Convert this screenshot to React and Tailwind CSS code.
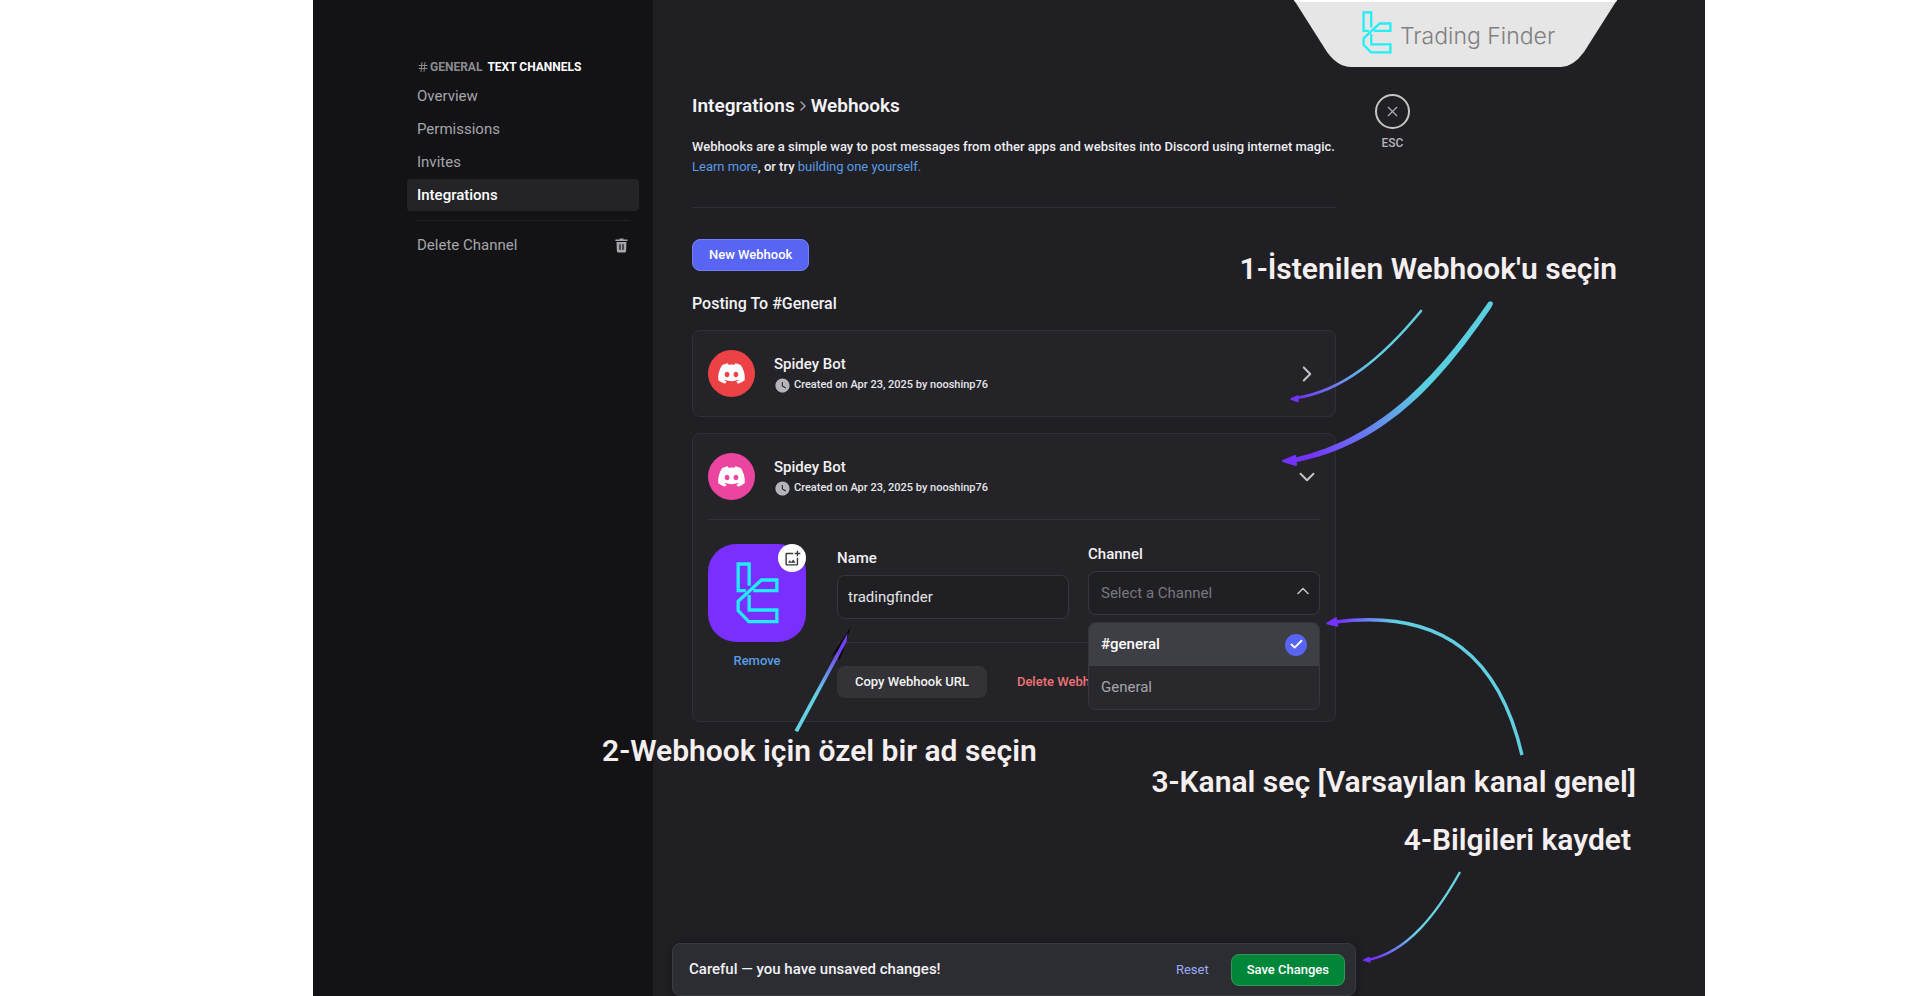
import { useState } from "react";
import { Check, ChevronDown, ChevronRight, ChevronUp, Hash, X } from "lucide-react";
import { FaDiscord } from "react-icons/fa";
import { MdOutlineAddPhotoAlternate, MdWatchLater } from "react-icons/md";

function TradingFinderMark({ className }) {
  return (
    <svg viewBox="172 150 128 186" className={className} fill="none" stroke="currentColor" strokeWidth="10" aria-hidden="true">
      <path d="M211 221V156H178V236H201" />
      <path d="M223 236H294V204H248L178 268V296L210 329H294V294H211V249" />
    </svg>
  );
}

function TrashIcon() {
  return (
    <svg viewBox="0 0 13 15" className="h-[15px] w-[13px]" aria-hidden="true">
      <path fill="currentColor" d="M4.5 0.5h4v1H12a.7.7 0 0 1 0 1.5H1a.7.7 0 0 1 0-1.500H4.500z" />
      <path fill="currentColor" d="M1.500 4h10l-.4 9a1.600 1.600 0 0 1-1.600 1.500h-6A1.600 1.600 0 0 1 1.900 13z" />
      <path stroke="#131315" strokeWidth="1.200" strokeLinecap="round" d="M5 6.500v5M8 6.500v5" />
    </svg>
  );
}

const navItems = ["Overview", "Permissions", "Invites", "Integrations"];

function Sidebar() {
  return (
    <aside className="w-[340px] shrink-0 bg-[#131315] pl-[94px] pr-[14px] pt-[57px]">
      <div className="flex h-5 items-center gap-[5px] pl-[10px] text-xs font-bold">
        <span className="flex items-center gap-px text-[#8b8b91]">
          <Hash className="size-3" />
          GENERAL
        </span>
        <span className="text-white">TEXT CHANNELS</span>
      </div>
      <nav className="mt-[3px] flex flex-col gap-px text-[15px]">
        {navItems.map((item) =>
          item === "Integrations" ? (
            <a key={item} href="#integrations" aria-current="page" className="flex h-8 items-center rounded bg-[#242427] px-[10px] font-medium text-white">
              {item}
            </a>
          ) : (
            <a key={item} href={"#" + item.toLowerCase()} className="flex h-8 items-center rounded px-[10px] text-[#a5a5ab]">
              {item}
            </a>
          )
        )}
      </nav>
      <hr className="mx-[9px] mt-[9px] border-[#212124]" />
      <button type="button" className="mt-2 flex h-8 w-full items-center justify-between pl-[10px] pr-[11px] text-[15px] text-[#a5a5ab]">
        Delete Channel
        <TrashIcon />
      </button>
    </aside>
  );
}

function WebhookHeader({ color, open }) {
  return (
    <button type="button" aria-expanded={open} className="flex h-[85px] w-full items-center text-left">
      <span className={"flex size-[47px] items-center justify-center rounded-full text-white " + color}>
        <FaDiscord className="size-[29px]" />
      </span>
      <span className="ml-[19px] flex flex-col">
        <span className="text-[15px] leading-6 font-medium text-[#f2f2f4]">Spidey Bot</span>
        <span className="flex h-5 items-center gap-[3px] text-[11px] font-medium text-[#e6e6ea]">
          <MdWatchLater className="size-[17px] text-[#b4b4ba]" />
          Created on Apr 23, 2025 by nooshinp76
        </span>
      </span>
      {open ? (
        <ChevronDown className="ml-auto size-[26px] text-[#c4c4c9]" strokeWidth={1.8} />
      ) : (
        <ChevronRight className="ml-auto size-[26px] text-[#c4c4c9]" strokeWidth={1.8} />
      )}
    </button>
  );
}

const channels = ["#general", "General"];

function ChannelField() {
  const [channel, setChannel] = useState("");
  return (
    <div>
      <label htmlFor="channel" className="block text-[15px] leading-5 font-medium text-[#f2f2f4]">
        Channel
      </label>
      <div className="relative mt-[7px]">
        <select
          id="channel"
          value={channel}
          onChange={(e) => setChannel(e.target.value)}
          className="h-11 w-full appearance-none rounded-lg border border-[#36363c] bg-[#202024] px-3 text-[15px] text-[#77777e] outline-none"
        >
          <option value="">Select a Channel</option>
          {channels.map((name) => (
            <option key={name}>{name}</option>
          ))}
        </select>
        <ChevronUp className="pointer-events-none absolute top-[10px] right-[7px] size-5 text-[#c4c4c9]" strokeWidth={1.8} />
        <ul role="listbox" aria-label="Channel" className="absolute top-full z-10 mt-[7px] w-full overflow-hidden rounded-lg border border-[#36363c] bg-[#28282d] text-[15px]">
          <li role="option" aria-selected="true" className="flex h-[43px] items-center justify-between bg-[#3e3e45] px-3 font-medium text-white">
            #general
            <span className="flex size-[22px] items-center justify-center rounded-full bg-[#5865f2]">
              <Check className="size-[15px]" strokeWidth={3} />
            </span>
          </li>
          <li role="option" aria-selected="false" className="flex h-[43px] items-center px-3 text-[#a5a5ab]">
            General
          </li>
        </ul>
      </div>
    </div>
  );
}

function WebhookEditor() {
  return (
    <div className="flex gap-[31px] border-t border-[#323238] pt-6 pb-[23px]">
      <div className="w-[98px] shrink-0">
        <div className="relative flex size-[98px] items-center justify-center rounded-[28px] bg-[#7b2fff]">
          <TradingFinderMark className="h-[62px] w-[43px] text-[#22eaf8]" />
          <button type="button" aria-label="Change avatar" className="absolute top-0 right-0 flex size-7 items-center justify-center rounded-full bg-white text-[#3a3a40]">
            <MdOutlineAddPhotoAlternate className="size-[17px]" />
          </button>
        </div>
        <button type="button" className="mt-[9px] block w-full text-center text-[13px] leading-5 font-medium text-[#5a9be6]">
          Remove
        </button>
      </div>
      <div className="min-w-0 flex-1">
        <div className="grid grid-cols-2 gap-[19px]">
          <div className="pt-1">
            <label htmlFor="name" className="block text-[15px] leading-5 font-medium text-[#f2f2f4]">
              Name
            </label>
            <input
              id="name"
              type="text"
              defaultValue="tradingfinder"
              className="mt-[7px] h-11 w-full rounded-lg border border-[#36363c] bg-[#202024] px-[10px] text-[15px] text-[#e4e4e8] outline-none"
            />
          </div>
          <ChannelField />
        </div>
        <div className="mt-[23px] flex items-center gap-[30px] border-t border-[#303036] pt-[23px]">
          <button type="button" className="h-8 rounded-lg bg-[#323237] px-[18px] text-[13px] font-medium text-[#f2f2f4]">
            Copy Webhook URL
          </button>
          <button type="button" className="h-8 text-[13px] font-medium text-[#ee7276]">
            Delete Webhook
          </button>
        </div>
      </div>
    </div>
  );
}

function SaveBar() {
  return (
    <div className="mt-auto flex h-[53px] items-center rounded-lg border border-[#3a3b40] bg-[#2c2d32] pr-[10px] pl-4 shadow-[0_2px_10px_rgba(0,0,0,0.35)]">
      <p className="text-[15px] font-medium text-[#f2f2f4]">Careful — you have unsaved changes!</p>
      <button type="button" className="ml-auto text-[13px] text-[#9fa9f5]">
        Reset
      </button>
      <button type="button" className="ml-[22px] h-8 rounded-lg border border-[#2f9a57] bg-[#008639] px-[15px] text-[13px] font-medium text-white">
        Save Changes
      </button>
    </div>
  );
}

function Banner() {
  return (
    <div className="absolute top-0 right-[88px] h-[67px] w-[323px]">
      <svg viewBox="0 0 323 67" className="absolute inset-0 size-full" aria-hidden="true">
        <path fill="#e6e6e6" d="M0 0H323L290 52Q279 67 267 67H57Q44 67 33 52Z" />
        <path fill="#fff" d="M0 0H323L322 2H1Z" />
      </svg>
      <div className="relative flex h-[64px] items-center gap-2 pl-[68px]">
        <TradingFinderMark className="h-[43px] w-[30px] text-[#22eef4]" />
        <span className="mt-2 font-['Inter',sans-serif] text-[23px] leading-8 font-light text-[#808080]">Trading Finder</span>
      </div>
    </div>
  );
}

function Arrows() {
  return (
    <svg viewBox="313 0 1392 996" className="pointer-events-none absolute top-0 left-0 h-[996px] w-[1392px]" fill="none" strokeLinecap="round" aria-hidden="true">
      <defs>
        <linearGradient id="g1" gradientUnits="userSpaceOnUse" x1="1298" y1="398" x2="1372" y2="362">
          <stop offset="0" stopColor="#7433ff" />
          <stop offset="1" stopColor="#62cfe0" />
        </linearGradient>
        <linearGradient id="g2" gradientUnits="userSpaceOnUse" x1="1310" y1="456" x2="1420" y2="388">
          <stop offset="0" stopColor="#7433ff" />
          <stop offset="1" stopColor="#5acfe0" />
        </linearGradient>
        <linearGradient id="g3" gradientUnits="userSpaceOnUse" x1="1340" y1="622" x2="1395" y2="622">
          <stop offset="0" stopColor="#7433ff" />
          <stop offset="1" stopColor="#62cfe0" />
        </linearGradient>
        <linearGradient id="g4" gradientUnits="userSpaceOnUse" x1="1374" y1="958" x2="1415" y2="930">
          <stop offset="0" stopColor="#7433ff" />
          <stop offset="1" stopColor="#68d4e2" />
        </linearGradient>
        <linearGradient id="g5" gradientUnits="userSpaceOnUse" x1="838" y1="650" x2="816" y2="695">
          <stop offset="0" stopColor="#7440f5" />
          <stop offset="1" stopColor="#62d3e2" />
        </linearGradient>
      </defs>
      <path stroke="url(#g1)" strokeWidth="2.600" d="M1421 311C1383 357 1343 391 1296 398" />
      <path fill="#7433ff" stroke="#7433ff" strokeWidth="1.500" strokeLinejoin="round" d="M1291 399L1298 396L1298 401.500Z" />
      <path fill="url(#g2)" d="M1488.500 302Q1491.500 300 1493 303Q1493 305 1491 308C1446 373 1390 445 1294 462.500L1293 458C1386 438 1443 367 1488.500 302Z" />
      <path fill="#7433ff" stroke="#7433ff" strokeWidth="2" strokeLinejoin="round" d="M1283 461L1295 456L1296 465Z" />
      <path stroke="url(#g3)" strokeWidth="3.400" strokeLinecap="butt" d="M1522 755C1500 660 1445 608 1335 622" />
      <path fill="#7433ff" stroke="#7433ff" strokeWidth="1.500" strokeLinejoin="round" d="M1327 623.500L1336 618L1337.500 626Z" />
      <path stroke="url(#g4)" strokeWidth="2.400" strokeLinecap="butt" d="M1460 872C1436 915 1407 952 1368 960" />
      <path fill="#7433ff" stroke="#7433ff" strokeLinejoin="round" d="M1363.500 960L1369 957L1370 962Z" />
      <path fill="#08080c" d="M850.500 627L831 657L838 651L839 661L843 652Z" />
      <path fill="url(#g5)" d="M847.500 633L846.500 642L798 732L794.500 730.500Z" />
    </svg>
  );
}

function Annotation({ className, children }) {
  return (
    <p className={"absolute text-[30px] leading-10 font-semibold whitespace-nowrap text-[#f6eff0] " + className}>{children}</p>
  );
}

export default function App() {
  return (
    <div className="min-h-screen bg-white pr-[214px] pl-[313px] font-['Roboto',sans-serif]">
      <div className="relative flex min-h-screen bg-[#202024]">
        <Sidebar />
        <main className="flex min-w-0 flex-1 pl-[19px]">
          <div className="flex w-[684px] flex-col">
            <div className="px-5 pt-[94px]">
              <h1 className="flex items-center text-[19px] leading-6 font-semibold text-[#f4f4f6]">
                Integrations
                <ChevronRight className="size-4 text-[#a5a5ab]" strokeWidth={2} />
                Webhooks
              </h1>
              <p className="mt-[19px] text-[13px] leading-5 font-medium text-[#ececf0]">
                Webhooks are a simple way to post messages from other apps and websites into Discord using internet magic.
                <br />
                <a href="#learn" className="font-normal text-[#5a9be6]">Learn more</a>, or try{" "}
                <a href="#build" className="font-normal text-[#5a9be6]">building one yourself.</a>
              </p>
              <hr className="mt-[30px] border-[#303036]" />
              <button type="button" className="mt-[31px] block h-8 rounded-lg border border-[#757ff5] bg-[#5865f2] px-4 text-[13px] font-medium text-white">
                New Webhook
              </button>
              <h2 className="mt-[23px] text-base leading-5 font-medium text-[#f2f2f4]">Posting To #General</h2>
              <section className="mt-4 rounded-lg border border-[#303036] bg-[#242428] px-[15px]">
                <WebhookHeader color="bg-[#ed4245]" open={false} />
              </section>
              <section className="mt-4 rounded-lg border border-[#303036] bg-[#242428] px-[15px]">
                <WebhookHeader color="bg-[#eb459f]" open />
                <WebhookEditor />
              </section>
            </div>
            <SaveBar />
          </div>
          <button type="button" className="mt-[94px] ml-[19px] flex h-fit flex-col items-center gap-1 text-xs font-medium text-[#b4b4ba]">
            <span className="flex size-[35px] items-center justify-center rounded-full border-2 border-[#c4c4c9]">
              <X className="size-[17px]" strokeWidth={1.6} />
            </span>
            <span className="leading-5">ESC</span>
          </button>
        </main>
        <Banner />
        <Arrows />
        <Annotation className="top-[249px] right-[88px]">1-İstenilen Webhook'u seçin</Annotation>
        <Annotation className="top-[731px] left-[289px]">2-Webhook için özel bir ad seçin</Annotation>
        <Annotation className="top-[762px] right-[69px]">3-Kanal seç [Varsayılan kanal genel]</Annotation>
        <Annotation className="top-[820px] right-[74px]">4-Bilgileri kaydet</Annotation>
      </div>
    </div>
  );
}
